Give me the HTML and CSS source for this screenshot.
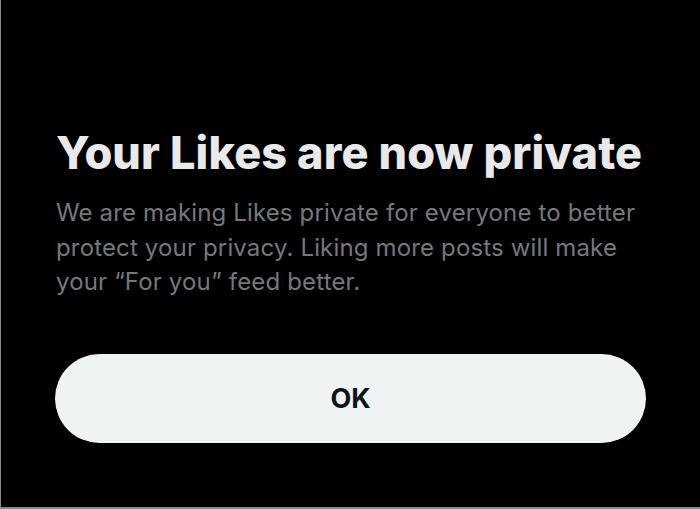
FILE: index.html
```html
<!DOCTYPE html>
<html>
<head>
<meta charset="utf-8">
<link rel="stylesheet" href="styles.css">
</head>
<body>
<div class="frame">
  <div class="sheet">
    <h1 class="title">Your Likes are now private</h1>
    <p class="desc">We are making Likes private for everyone to better protect your privacy. Liking more posts will make your “For you” feed better.</p>
    <button class="ok">OK</button>
  </div>
</div>
</body>
</html>
```
FILE: styles.css
```css
html, body {
  margin: 0;
  padding: 0;
  background: #000;
}
.frame {
  width: 699px;
  height: 507px;
  border-left: 1px solid #8a8a8a;
  border-bottom: 2px solid #8a8a8a;
  background: #000;
  box-sizing: content-box;
}
.sheet {
  padding: 126px 55px 0 55px;
  display: flex;
  flex-direction: column;
  font-family: Inter, "Noto Sans", sans-serif;
}
.title {
  margin: 0;
  color: #e7e9ea;
  font-size: 45px;
  font-weight: 800;
  line-height: 54px;
  letter-spacing: 0.1px;
}
.desc {
  margin: 16px 0 0 0;
  width: 590px;
  color: #74797e;
  font-size: 24px;
  line-height: 34.5px;
  letter-spacing: 0.15px;
}
.ok {
  margin-top: 54px;
  height: 89px;
  width: 591px;
  margin-left: -1px;
  border: none;
  border-radius: 45px;
  background: #eff3f4;
  color: #0f1419;
  font-family: Inter, "Noto Sans", sans-serif;
  font-size: 27px;
  font-weight: 700;
}
```
